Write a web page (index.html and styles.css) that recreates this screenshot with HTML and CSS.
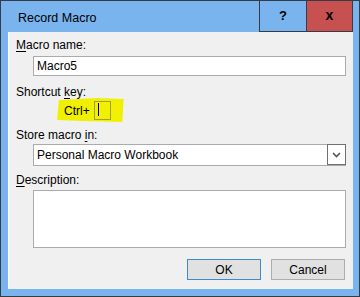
FILE: index.html
```html
<!DOCTYPE html>
<html lang="en">
<head>
  <meta charset="UTF-8" />
  <title>Record Macro</title>
  <link rel="stylesheet" href="styles.css">
</head>
<body>
  <div class="window">
    <div class="titlebar">
      <div class="title">Record Macro</div>
      <div class="tb-btn help">?</div>
      <div class="tb-btn close">x</div>
    </div>

    <div class="panel">
      <div class="label"><u>M</u>acro name:</div>
      <div class="field input">Macro5</div>

      <div class="label gap-l">Shortcut <u>k</u>ey:</div>
      <div class="highlight">
        <span>Ctrl+</span>
        <span class="keybox"><span class="caret"></span></span>
      </div>

      <div class="label gap-s">Store macro <u>i</u>n:</div>
      <div class="field select">
        <span class="value">Personal Macro Workbook</span>
        <span class="dropdown">
          <svg width="9" height="6" viewBox="0 0 9 6"><polyline points="1,1 4.5,4.5 8,1" fill="none" stroke="#555" stroke-width="1.6"/></svg>
        </span>
      </div>

      <div class="label gap-d"><u>D</u>escription:</div>
      <div class="field textarea"></div>

      <div class="actions">
        <button class="default">OK</button>
        <button>Cancel</button>
      </div>
    </div>
  </div>
</body>
</html>
```

FILE: styles.css
```css
:root {
  --frame: #7ab4ee;
  --edge: #353c44;
  --panel: #f0f0f0;
  --field-border: #a9abb0;
  --marker: #f0f000;
}
* {
  margin: 0;
  padding: 0;
  box-sizing: border-box;
}
body {
  font-family: 'Liberation Sans', Arial, sans-serif;
  font-size: 12px;
  color: #000;
  background: #fff;
}
.window {
  width: 360px;
  height: 297px;
  border: 1px solid var(--edge);
  background: var(--frame);
  display: flex;
  flex-direction: column;
  padding: 0 6px 7px 7px;
}
.titlebar {
  height: 31px;
  display: flex;
  margin-right: -0px;
}
.title {
  flex: 1;
  padding: 3px 0 0 10px;
  line-height: 28px;
  font-size: 12.5px;
}
.tb-btn {
  width: 47px;
  height: 31px;
  border: 1px solid var(--edge);
  border-top: none;
  display: flex;
  align-items: center;
  justify-content: center;
  font-weight: bold;
  font-size: 13px;
  padding-bottom: 2px;
}
.tb-btn.help {
  border-right: none;
}
.tb-btn.close {
  background: #c75050;
  font-size: 14px;
}
.panel {
  flex: 1;
  background: var(--panel);
  box-shadow: inset 1px 0 #fcfaf4, inset 2px 0 #f6f3ea;
  padding: 6px 7px 0 8px;
  display: flex;
  flex-direction: column;
  align-items: flex-start;
}
.label {
  line-height: 15px;
}
.label u {
  text-decoration-thickness: 1px;
  text-underline-offset: 2px;
}
.gap-l { margin-top: 9px; }
.gap-s { margin-top: 6px; }
.gap-d { margin-top: 7px; }
.field {
  align-self: stretch;
  margin-left: 17px;
  background: #fff;
  border: 1px solid var(--field-border);
}
.input {
  margin-top: 3px;
  height: 20px;
  padding-left: 3px;
  line-height: 18px;
}
.highlight {
  margin: -2px 0 0 41px;
  padding: 3px 13px 2px 7px;
  background: var(--marker);
  display: flex;
  align-items: center;
  clip-path: polygon(3% 8%, 60% 0, 100% 4%, 98% 100%, 40% 96%, 0 92%);
}
.keybox {
  margin-left: 4px;
  width: 17px;
  height: 19px;
  border: 1px solid #a0a030;
  padding: 1px 0 0 3px;
}
.caret {
  display: block;
  width: 1px;
  height: 13px;
  background: #000;
}
.select {
  margin-top: 1px;
  height: 22px;
  display: flex;
  align-items: center;
  padding-left: 3px;
}
.select .value {
  flex: 1;
}
.dropdown {
  width: 19px;
  height: 21px;
  margin-right: -1px;
  margin-top: -1px;
  border: 1px solid #707070;
  display: flex;
  align-items: center;
  justify-content: center;
  background: #fff;
}
.textarea {
  margin-top: 2px;
  height: 58px;
}
.actions {
  align-self: stretch;
  margin-top: 11px;
  display: flex;
  justify-content: flex-end;
  gap: 10px;
  padding-right: 1px;
}
.actions button {
  width: 74px;
  height: 21px;
  font-family: inherit;
  font-size: 12px;
  background: #e1e1e1;
  border: 1px solid #adadad;
  color: #000;
}
.actions button.default {
  border-color: #3d8ad0;
}
```
